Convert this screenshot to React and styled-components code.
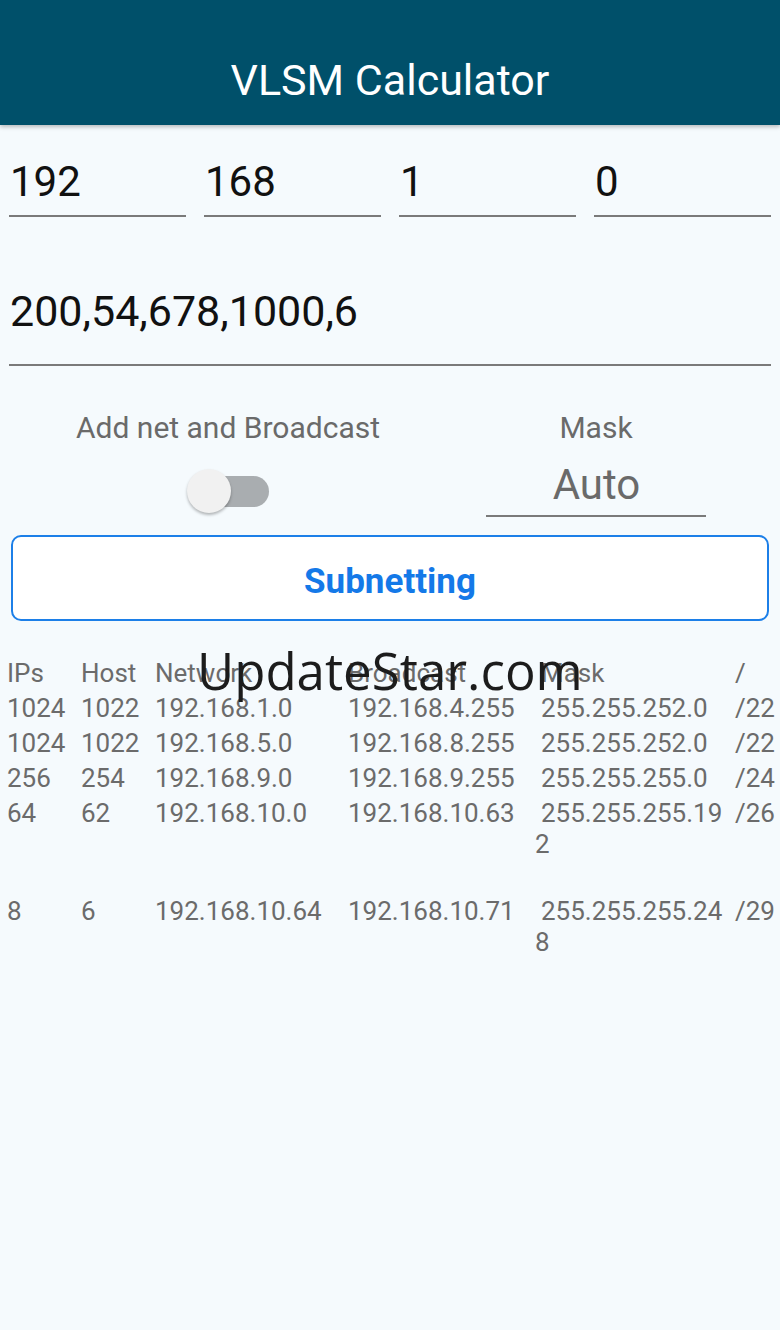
import React from "react";
import styled, { createGlobalStyle } from "styled-components";

const Global = createGlobalStyle`
  html, body { margin: 0; padding: 0; }
  body { background: #f5fafd; font-family: Roboto, "Noto Sans", sans-serif; }
  #root { min-height: 1330px; }
`;

const Page = styled.div`
  position: relative;
  width: 780px;
  min-height: 1330px;
  background: #f5fafd;
  overflow: hidden;
`;

const Header = styled.header`
  height: 125px;
  background: #00506a;
  box-shadow: 0 2px 4px rgba(0,0,0,0.25);
  display: flex;
  justify-content: center;
  box-sizing: border-box;
  padding-top: 55px;
`;

const Title = styled.h1`
  margin: 0;
  font-family: Roboto, sans-serif;
  font-weight: 400;
  font-size: 43px;
  line-height: 50px;
  color: #ffffff;
`;

const IpRow = styled.div`
  display: flex;
  gap: 18px;
  padding: 0 9px;
  margin-top: 32px;
`;

const Field = styled.div`
  flex: ${p => p.$flex || "none"};
  width: ${p => p.$width || "auto"};
  box-sizing: border-box;
  padding: 0 0 ${p => p.$pb || 8}px 1px;
  border-bottom: 2px solid #7a7a7a;
  font-size: ${p => p.$size || 42}px;
  line-height: ${p => p.$lh || 50}px;
  color: ${p => p.$color || "#111"};
  text-align: ${p => p.$align || "left"};
`;

const HostsWrap = styled.div`
  padding: 0 9px;
  margin-top: 69px;
`;

const Options = styled.div`
  display: flex;
  margin-top: 45px;
`;

const Col = styled.div`
  display: flex;
  flex-direction: column;
  align-items: center;
  width: ${p => p.$width}px;
  margin-left: ${p => p.$ml || 0}px;
`;

const Label = styled.div`
  font-size: 30px;
  line-height: 34px;
  color: #6a6a6a;
`;

const SwitchBox = styled.div`
  height: 44px;
  display: flex;
  align-items: center;
  margin-top: 24px;
`;

const Track = styled.div`
  position: relative;
  width: 60px;
  height: 31px;
  margin-left: 22px;
  border-radius: 16px;
  background: #a9adb0;
`;

const Thumb = styled.div`
  position: absolute;
  left: -22px;
  top: -7px;
  width: 44px;
  height: 44px;
  border-radius: 50%;
  background: #f1f1f1;
  box-shadow: 0 2px 3px rgba(0,0,0,0.28);
`;

const MaskField = styled(Field)`
  margin-top: 16px;
`;

const Button = styled.button`
  display: block;
  margin: 18px 11px 0;
  width: 758px;
  height: 86px;
  box-sizing: border-box;
  border: 2px solid #1c7fe8;
  border-radius: 10px;
  background: #ffffff;
  font-family: Roboto, sans-serif;
  font-weight: 700;
  font-size: 35px;
  line-height: 40px;
  color: #1479e8;
  padding: 8px 0 0;
`;

const Table = styled.div`
  margin-top: 35px;
  padding-left: 7px;
`;

const Row = styled.div`
  display: grid;
  grid-template-columns: 74px 74px 193px 187px 200px 1fr;
  min-height: ${p => p.$h || 35}px;
  align-items: start;
`;

const Cell = styled.div`
  padding: 2px 0;
  font-size: 26px;
  line-height: 31px;
  color: #6b6b6b;
  white-space: nowrap;
`;

const MaskCell = styled(Cell)`
  white-space: normal;
  word-break: break-all;
  text-indent: 6px;
`;

const Watermark = styled.div`
  position: absolute;
  left: 197px;
  top: 635px;
  font-family: "Open Sans", sans-serif;
  font-size: 51px;
  line-height: 70px;
  color: #1c1c1c;
  pointer-events: none;
`;

const rows = [
  ["1024", "1022", "192.168.1.0", "192.168.4.255", "255.255.252.0", "/22"],
  ["1024", "1022", "192.168.5.0", "192.168.8.255", "255.255.252.0", "/22"],
  ["256", "254", "192.168.9.0", "192.168.9.255", "255.255.255.0", "/24"],
  ["64", "62", "192.168.10.0", "192.168.10.63", "255.255.255.192", "/26", 98],
  ["8", "6", "192.168.10.64", "192.168.10.71", "255.255.255.248", "/29"],
];

export default function App() {
  return (
    <Page>
      <Global />
      <Header>
        <Title>VLSM Calculator</Title>
      </Header>
      <IpRow>
        {["192", "168", "1", "0"].map((o, i) => (
          <Field key={i} $width="177px">{o}</Field>
        ))}
      </IpRow>
      <HostsWrap>
        <Field $pb={28} $size={43}>200,54,678,1000,6</Field>
      </HostsWrap>
      <Options>
        <Col $width={456}>
          <Label>Add net and Broadcast</Label>
          <SwitchBox>
            <Track>
              <Thumb />
            </Track>
          </SwitchBox>
        </Col>
        <Col $width={220} $ml={30}>
          <Label>Mask</Label>
          <MaskField $width="220px" $size={42} $lh={48} $pb={6} $color="#6a6a6a" $align="center">Auto</MaskField>
        </Col>
      </Options>
      <Button>Subnetting</Button>
      <Table>
        <Row>
          <Cell>IPs</Cell>
          <Cell>Host</Cell>
          <Cell>Network</Cell>
          <Cell>Broadcast</Cell>
          <MaskCell>Mask</MaskCell>
          <Cell>/</Cell>
        </Row>
        {rows.map((r, i) => (
          <Row key={i} $h={r[6]}>
            <Cell>{r[0]}</Cell>
            <Cell>{r[1]}</Cell>
            <Cell>{r[2]}</Cell>
            <Cell>{r[3]}</Cell>
            <MaskCell>{r[4]}</MaskCell>
            <Cell>{r[5]}</Cell>
          </Row>
        ))}
      </Table>
      <Watermark>UpdateStar.com</Watermark>
    </Page>
  );
}
